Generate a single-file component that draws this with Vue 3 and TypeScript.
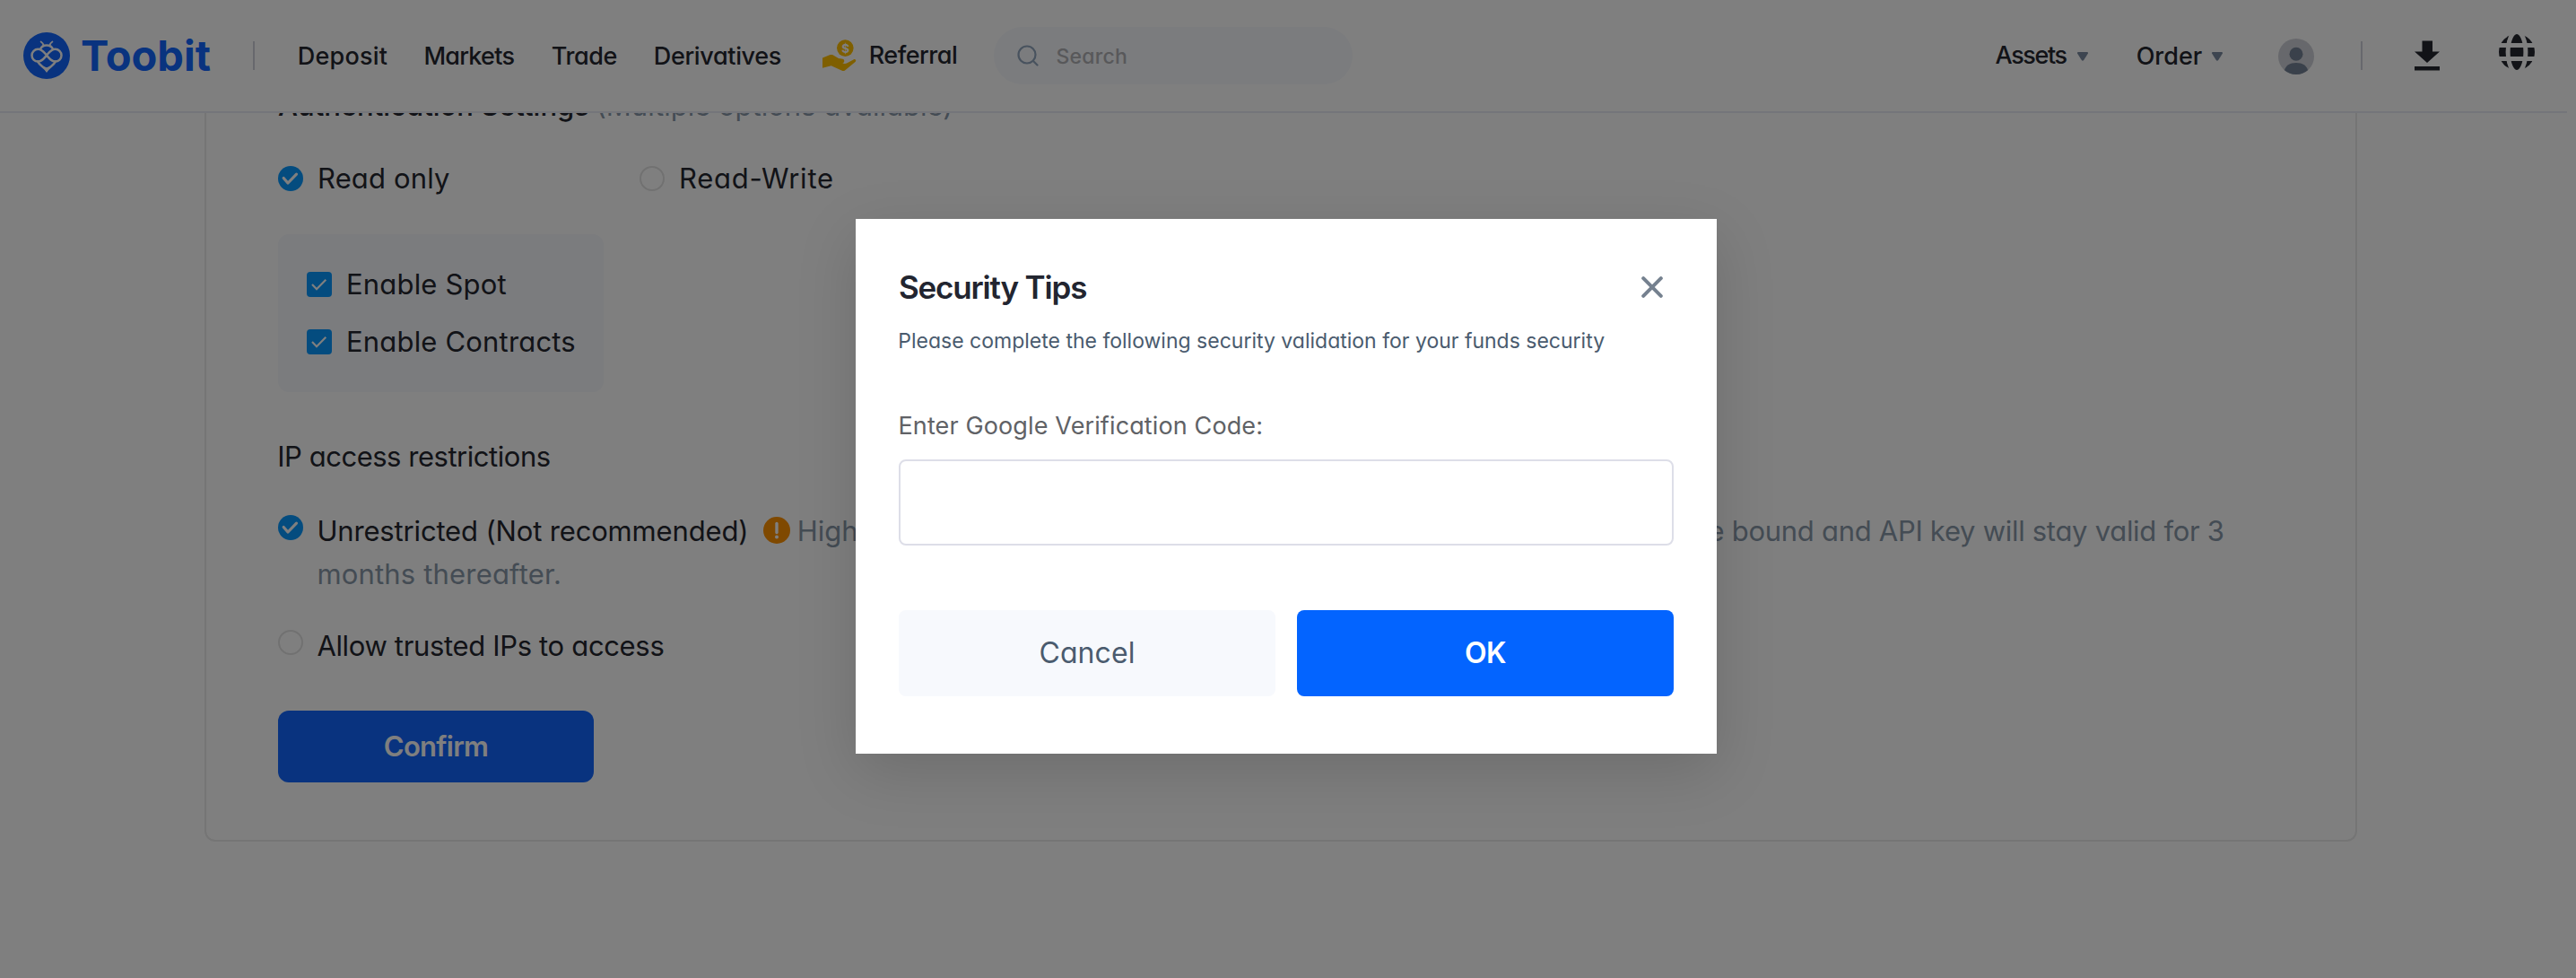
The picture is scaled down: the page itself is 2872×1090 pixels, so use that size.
<script setup lang="ts">
import { ref } from 'vue'

interface NavLink { label: string; spacing: string }
const navLinks: NavLink[] = [
  { label: 'Deposit', spacing: '0.2px' },
  { label: 'Markets', spacing: '-0.75px' },
  { label: 'Trade', spacing: '-0.4px' },
  { label: 'Derivatives', spacing: '-0.35px' },
]
const permissions = [
  { label: 'Enable Spot', checked: true },
  { label: 'Enable Contracts', checked: true },
]
const code = ref('')
</script>

<template>
  <div class="page">
    <header class="header">
      <div class="logo">
        <svg class="logo-mark" viewBox="0 0 52 52" width="52" height="52">
          <circle cx="26" cy="26" r="26" fill="#1266ff" />
          <g fill="none" stroke="#fff" stroke-width="2.5" stroke-linecap="round" stroke-linejoin="round">
            <path d="M26 25.6c-3-3.4-5-6.8-9.6-6.8a6.9 6.9 0 0 0 0 13.8c4.6 0 6.6-3.6 9.6-7s5-6.8 9.6-6.8a6.9 6.9 0 0 1 0 13.8c-4.6 0-6.6-3.6-9.6-7z" />
            <path d="M19 18.8c1-2.8 4-4.4 7-4.4s6 1.6 7 4.4" />
            <path d="M22.6 14.6c-.4-2-1.4-3.2-3-4.2M29.4 14.6c.4-2 1.4-3.2 3-4.2" stroke-width="1.8" />
            <path d="M16 32.6c2 4.4 7.5 6 10 10.4 2.5-4.400 8-6 10-10.4" />
          </g>
          <path d="M21.5 37.5l4.5 1.8 4.5-1.8-4.500 7.5z" fill="#fff" />
        </svg>
        <span class="logo-text">Toobit</span>
      </div>
      <i class="divider divider-left"></i>
      <nav class="nav">
        <a v-for="link in navLinks" :key="link.label" :style="{ letterSpacing: link.spacing }">{{ link.label }}</a>
      </nav>
      <a class="referral">
        <svg viewBox="0 0 38 36" width="38" height="36">
          <circle cx="25.3" cy="9.6" r="9.3" fill="#ffbe00" />
          <text x="25.3" y="14.5" text-anchor="middle" font-size="13.5" font-weight="700" fill="#fff">$</text>
          <path fill="#ffbe00" d="M0 20.6L8 17.3c1.4-.4 2.8-.4 4 .2l5 3c1.2.7 2.4.9 4 .9 2.4 0 3.6 1.3 3.2 3-.2 1-.9 1.600-1.900 1.900 1.700.9 3.600.8 5.200-.1l7-3.800c1-.5 2-.3 2.500.4.5.8.2 1.700-.5 2.200L25 34.500c-1 .7-2.200.7-3.200.2L9.700 29.200 0 31.800z" />
        </svg>
        <span>Referral</span>
      </a>
      <div class="search">
        <svg viewBox="0 0 24 24" width="24" height="24" fill="none" stroke="#90a5bd" stroke-width="2.2" stroke-linecap="round">
          <circle cx="11" cy="11" r="9.5" /><path d="M18 18l4.5 4.5" />
        </svg>
        <span>Search</span>
      </div>
      <div class="tools">
        <a class="assets">Assets</a>
        <svg class="caret" viewBox="0 0 12 10" width="12" height="10"><path d="M1 0h10c1 0 1.300.9.8 1.700L7.200 9c-.6.9-1.800.9-2.400 0L.2 1.700C-.3.9 0 0 1 0z" fill="#7b8aa0" /></svg>
        <a class="order">Order</a>
        <svg class="caret" viewBox="0 0 12 10" width="12" height="10"><path d="M1 0h10c1 0 1.300.9.8 1.700L7.200 9c-.6.9-1.800.9-2.400 0L.2 1.700C-.3.9 0 0 1 0z" fill="#7b8aa0" /></svg>
        <svg class="avatar" viewBox="0 0 40 40" width="40" height="40">
          <circle cx="20" cy="20" r="20" fill="#cfd1d8" />
          <circle cx="20" cy="17.3" r="7.5" fill="#758296" />
          <path d="M7 35.200C8 30.500 13 27 20 27s12 3.500 13 8.200A20 20 0 0 1 7 35.200z" fill="#758296" />
        </svg>
        <i class="divider"></i>
        <svg class="download" viewBox="0 0 28 36" width="28" height="36" fill="#24262f">
          <path d="M8.5 1.5h11.5V13.500H28L14 26 0 13.500h8.500zM0 30h28v4.500H0z" />
        </svg>
        <svg class="globe" viewBox="0 0 40 40" width="40" height="40">
          <circle cx="20" cy="20" r="20" fill="#24262f" />
          <ellipse cx="20" cy="20" rx="9.9" ry="22.5" fill="none" stroke="#fff" stroke-width="5" />
          <path d="M0 12.500h40M0 27.500h40" stroke="#fff" stroke-width="5" />
        </svg>
      </div>
    </header>

    <main class="viewport">
      <section class="card">
        <h2 class="heading"><span class="auth">Authentication Settings</span><span class="muted hint">(Multiple options available)</span></h2>
        <div class="modes">
          <label class="option first">
            <svg class="mark" viewBox="0 0 28 28"><circle cx="14" cy="14" r="14" fill="#0898ff" /><path d="M6.200 13.500l4.800 5.500 9.500-9.800" fill="none" stroke="#fff" stroke-width="3.2" stroke-linecap="round" stroke-linejoin="round" /></svg>
            <span class="t-read">Read only</span>
          </label>
          <label class="option"><i class="empty"></i><span class="t-write">Read-Write</span></label>
        </div>
        <div class="permissions">
          <label v-for="p in permissions" :key="p.label" class="option">
            <svg class="mark" viewBox="0 0 28 28"><rect width="28" height="28" rx="4" fill="#0898ff" /><path v-if="p.checked" d="M6 14l5 5.200L21.300 8.800" fill="none" stroke="#fff" stroke-width="2.2" /></svg>
            <span>{{ p.label }}</span>
          </label>
        </div>
        <h3 class="ip-title">IP access restrictions</h3>
        <div class="restriction">
          <svg class="mark" viewBox="0 0 28 28"><circle cx="14" cy="14" r="14" fill="#0898ff" /><path d="M6.200 13.500l4.800 5.500 9.500-9.800" fill="none" stroke="#fff" stroke-width="3.2" stroke-linecap="round" stroke-linejoin="round" /></svg>
          <div class="body">
            <div class="line">
              <span class="t-unres">Unrestricted (Not recommended)</span>
              <svg class="warn" viewBox="0 0 30 30" width="30" height="30"><circle cx="15" cy="15" r="15" fill="#ff9200" /><path d="M15 7.500v10" stroke="#fff" stroke-width="3.4" stroke-linecap="round" /><circle cx="15" cy="22.4" r="2" fill="#fff" /></svg>
              <p class="note muted"><span>High risk. For account security, only unrestricted API keys can</span><span class="t-bound">be bound and API key will stay valid for 3</span></p>
            </div>
            <div class="muted t-months">months thereafter.</div>
          </div>
        </div>
        <div class="restriction allow">
          <i class="empty"></i>
          <div class="body t-allow">Allow trusted IPs to access</div>
        </div>
        <button class="confirm" type="button">Confirm</button>
      </section>
    </main>

    <div class="overlay">
      <div class="modal">
        <div class="modal-head">
          <h1>Security Tips</h1>
          <svg viewBox="0 0 24 24" width="24" height="24" fill="none" stroke="#75818f" stroke-width="4" stroke-linecap="round"><path d="M2.200 2.200l19.600 19.600M21.800 2.200L2.200 21.800" /></svg>
        </div>
        <p class="sub">Please complete the following security validation for your funds security</p>
        <label class="label" for="code">Enter Google Verification Code:</label>
        <input id="code" v-model="code" class="input" type="text" />
        <div class="actions">
          <button class="cancel" type="button">Cancel</button>
          <button class="ok" type="button">OK</button>
        </div>
      </div>
    </div>
  </div>
</template>

<style>
body { margin: 0; background: #fff; }
</style>
<style scoped>
.page {
  position: relative;
  display: flex;
  flex-direction: column;
  width: 2872px;
  height: 1090px;
  overflow: hidden;
  background: #fff;
  color: #24262f;
  font-family: Inter, "Liberation Sans", sans-serif;
  font-feature-settings: "cv11";
  font-size: 31px;
  line-height: 48px;
  white-space: nowrap;
}
.page * { box-sizing: border-box; }
svg { display: block; flex: none; }
h1, h2, h3, p { margin: 0; font-weight: 400; font-size: inherit; }
button, input { font: inherit; font-feature-settings: inherit; border: 0; padding: 0; margin: 0; }

.header {
  display: flex;
  align-items: center;
  flex: none;
  width: 2862px;
  height: 126px;
  padding: 0 36px 0 26px;
  border-bottom: 2px solid #e8eaf4;
  font-size: 27px;
  font-weight: 550;
}
.logo { display: flex; align-items: center; width: 256px; }
.logo-text { margin-left: 12px; font-size: 47px; font-weight: 700; color: #1266ff; }
.divider { flex: none; width: 2px; height: 32px; background: #cfd1da; }
.nav { display: grid; grid-template-columns: 140.6px 142.3px 114.1px 188.2px; margin: 1px 0 0 47.8px; }
.referral { display: flex; align-items: center; width: 191px; letter-spacing: -0.52px; }
.referral span { margin-left: 13.8px; margin-top: -1px; }
.search {
  display: flex;
  align-items: center;
  width: 400px;
  height: 64px;
  padding-left: 26px;
  border-radius: 32px;
  background: #f6f8fc;
  color: #b0b1b5;
  font-size: 23px;
  font-weight: 500;
  letter-spacing: 0.22px;
}
.search span { margin: 1px 0 0 19.5px; }
.tools { display: flex; align-items: center; margin-left: 716.6px; }
.assets { width: 91.4px; margin-top: -1px; letter-spacing: -1.4px; }
.order { width: 84.3px; margin-left: 53.7px; margin-top: 1px; }
.avatar { margin: 2px 52px 0 62px; }
.download { margin-left: 58px; }
.globe { margin: -8px 0 0 66px; }
.caret { margin-top: 1px; }

.viewport { flex: 1; width: 2862px; overflow: hidden; }
.card {
  display: flex;
  flex-direction: column;
  align-items: flex-start;
  width: 2400px;
  height: 844px;
  margin: -32px 0 0 228px;
  padding: 0 80px;
  border: 2px solid #eaeaea;
  border-top: 0;
  border-radius: 0 0 12px 12px;
}
.muted { color: #8998a9; }
.heading { display: flex; }
.auth { width: 354.5px; font-weight: 500; }
.modes { display: flex; margin-top: 33px; }
.option { display: flex; align-items: center; }
.option > span { margin-left: 16px; }
.first { width: 403px; }
.mark, .empty { flex: none; width: 28px; height: 28px; }
.empty { border: 2px solid #e3e3e3; border-radius: 50%; }
.t-read { letter-spacing: 0.15px; }
.t-write { letter-spacing: 0.75px; }
.permissions {
  display: flex;
  flex-direction: column;
  gap: 16px;
  width: 363px;
  height: 176px;
  margin-top: 38px;
  padding: 32px 30px;
  border-radius: 12px;
  background: #f6f8fc;
  letter-spacing: 0.18px;
}
.ip-title { margin: 48px 0 35px -0.8px; letter-spacing: -0.47px; }
.restriction { display: flex; }
.restriction > .mark, .restriction > .empty { margin-top: 6px; }
.body { margin-left: 15.4px; }
.line { display: flex; width: 2126.3px; }
.t-unres { width: 497.7px; letter-spacing: -0.16px; }
.warn { margin-top: 8px; }
.note { display: flex; flex: 1; justify-content: space-between; margin-left: 7.6px; }
.t-bound { letter-spacing: -0.29px; }
.t-months { letter-spacing: 0.18px; }
.allow { margin-top: 32px; }
.t-allow { letter-spacing: -0.34px; }
.confirm {
  width: 352px;
  height: 80px;
  margin-top: 48px;
  border-radius: 12px;
  background: #1266ff;
  color: #fff;
  font-weight: 600;
  letter-spacing: -0.73px;
}

.overlay {
  position: absolute;
  inset: 0;
  display: flex;
  justify-content: center;
  align-items: flex-start;
  padding: 244px 4px 0 0;
  background: rgba(0, 0, 0, 0.5);
}
.modal {
  display: flex;
  flex-direction: column;
  width: 960px;
  height: 596px;
  padding: 52px 48px 0;
  background: #fff;
  box-shadow: 0 20px 64px rgba(0, 0, 0, 0.14);
}
.modal-head { display: flex; justify-content: space-between; align-items: center; padding-right: 12px; }
.modal-head h1 { font-size: 35px; font-weight: 600; letter-spacing: -1.18px; color: #222530; }
.permissions .mark { margin-left: 2px; }
.sub { margin: 12px 0 0 -0.7px; font-size: 23px; color: #4a5b6e; }
.label { margin: 47px 0 0 -0.5px; font-size: 27px; letter-spacing: 0.12px; color: #606266; }
.input { width: 864px; height: 96px; margin-top: 13px; padding: 0 24px; border: 2px solid #dddee8; border-radius: 8px; background: #fff; outline: none; }
.actions { display: flex; gap: 24px; margin-top: 72px; }
.actions button { width: 420px; height: 96px; border-radius: 8px; }
.actions .cancel { background: #f7f9fd; color: #4a5b6e; font-size: 32px; letter-spacing: 0.1px; }
.actions .ok { background: #0364ff; color: #fff; font-size: 32px; font-weight: 600; letter-spacing: -0.5px; }
</style>
